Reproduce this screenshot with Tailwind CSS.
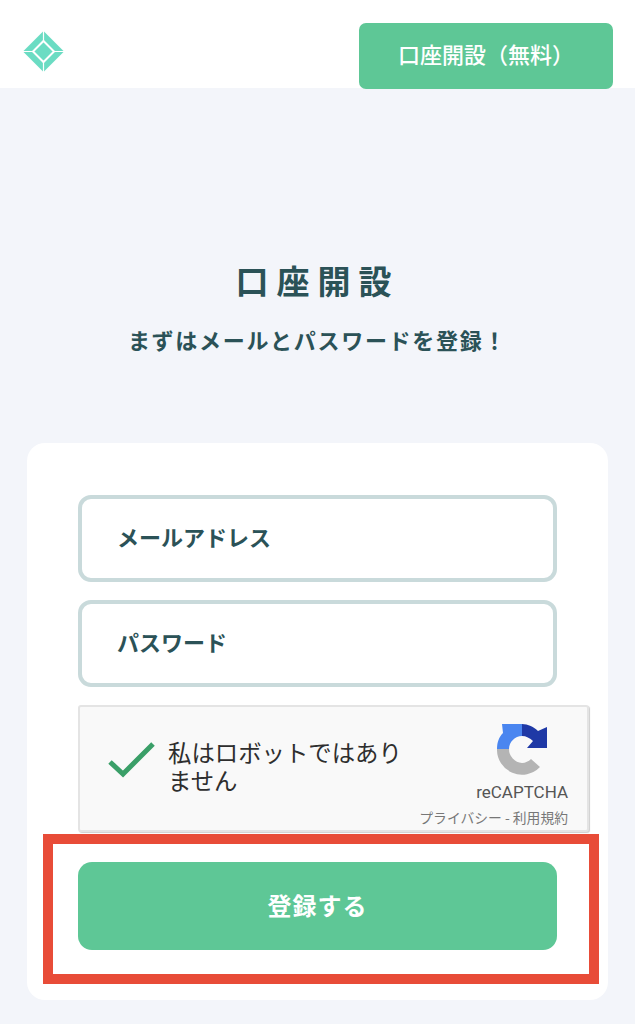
<!DOCTYPE html>
<html lang="ja">
<head>
  <meta charset="UTF-8">
  <meta name="viewport" content="width=device-width, initial-scale=1.0">
  <title>口座開設</title>
  <script src="https://cdn.jsdelivr.net/npm/@tailwindcss/browser@4"></script>
</head>
<body class="bg-[#f3f5fa] font-['Noto_Sans_CJK_JP','Noto_Sans',sans-serif] text-[#2b5257] h-[1024px] overflow-hidden">
  <!-- header -->
  <header class="bg-white h-[88px] flex items-start justify-between pt-[23px] pl-[23px] pr-[22px]">
    <svg class="w-[41px] h-[41px] mt-[8px]" viewBox="0 0 41 41">
      <polygon points="20.5,0 41,20.5 20.5,41 0,20.5" fill="#6bdcc3"/>
      <polygon points="20.5,10 31,20.5 20.5,31 10,20.5" fill="#6bdcc3" stroke="#fff" stroke-width="2"/>
      <path d="M20.5 0V10M20.5 31V41M0 20.5H10M31 20.5H41" stroke="#fff" stroke-width="1.2"/>
    </svg>
    <a class="relative w-[254px] h-[66px] pb-[5px] rounded-[7px] bg-[#5ec796] text-white text-[22px] font-medium flex items-center justify-center">口座開設（無料）</a>
  </header>

  <main class="flex flex-col items-center pt-[165px]">
    <h1 class="text-[33px] leading-[54px] font-bold tracking-[8px]">口座開設</h1>
    <p class="mt-[12px] text-[22px] leading-[40px] font-bold tracking-[1.7px]">まずはメールとパスワードを登録！</p>

    <!-- form card -->
    <section class="relative mt-[84px] w-[581px] h-[557px] bg-white rounded-[18px] pt-[52px] pl-[51px]">
      <div class="flex flex-col gap-[18px] w-[479px]">
        <div class="h-[87px] pb-[4px] border-[4px] border-[#c9dadb] rounded-[13px] flex items-center pl-[35px] text-[22px] font-semibold">メールアドレス</div>
        <div class="h-[87px] pb-[4px] border-[4px] border-[#c9dadb] rounded-[13px] flex items-center pl-[35px] text-[22px] font-semibold">パスワード</div>
      </div>

      <!-- recaptcha -->
      <div class="mt-[18px] w-[511px] h-[127px] bg-[#f9f9f9] border-2 border-[#e4e4e4] rounded-[3px] shadow-[1px_1px_1px_#cfcfcf] flex">
        <svg class="w-[50px] h-[40px] ml-[27px] mt-[33px]" viewBox="0 0 50 40" fill="none">
          <path d="M3 22L16 34L46 4" stroke="#3a9f68" stroke-width="5"/>
        </svg>
        <p class="w-[240px] ml-[11px] mt-[31px] text-[23.4px] leading-[28px] text-[#2e2e2e]">私はロボットではありません</p>
        <div class="flex-1 flex flex-col items-end pr-[19px] pt-[17px]">
          <svg class="w-[50px] h-[52px] mr-[21px]" viewBox="0 0 50 52">
            <path d="M0 25H12A14 14 0 0 0 25 39A14 14 0 0 0 34 35L43 43A25 25 0 0 1 0 25Z" fill="#b4b4b4"/>
            <path d="M25 0V12C18 12 12 18 12 25H0C0 18 2 13 6 9L5 0Z" fill="#4a86f0"/>
            <path d="M25 0C31 0 37 3 41 7L50 3V24H30L36 17C33 14 29 12 25 12Z" fill="#1f39a6"/>
          </svg>
          <span class="mt-[4px] text-[17px] leading-[24px] font-['Roboto'] text-[#555]">reCAPTCHA</span>
          <span class="mt-[3px] text-[13.8px] leading-[20px] text-[#777] whitespace-nowrap">プライバシー - 利用規約</span>
        </div>
      </div>

      <button class="mt-[30px] w-[479px] h-[88px] pb-[2px] rounded-[14px] bg-[#5ec796] text-white text-[24px] font-bold tracking-[1px]">登録する</button>

      <!-- red annotation -->
      <div class="absolute left-[16px] top-[391px] w-[556px] h-[150px] border-[10px] border-[#e84c38]"></div>
    </section>
  </main>
</body>
</html>
